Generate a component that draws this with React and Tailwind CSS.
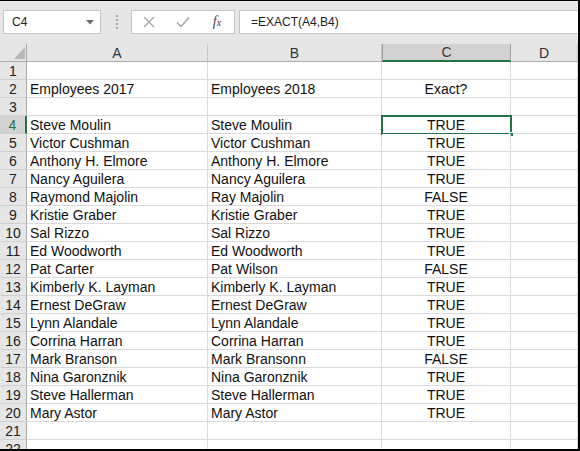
import React from "react";

const rows = [
  ["", "", ""],
  ["Employees 2017", "Employees 2018", "Exact?"],
  ["", "", ""],
  ["Steve Moulin", "Steve Moulin", "TRUE"],
  ["Victor Cushman", "Victor Cushman", "TRUE"],
  ["Anthony H. Elmore", "Anthony H. Elmore", "TRUE"],
  ["Nancy Aguilera", "Nancy Aguilera", "TRUE"],
  ["Raymond Majolin", "Ray Majolin", "FALSE"],
  ["Kristie Graber", "Kristie Graber", "TRUE"],
  ["Sal Rizzo", "Sal Rizzo", "TRUE"],
  ["Ed Woodworth", "Ed Woodworth", "TRUE"],
  ["Pat Carter", "Pat Wilson", "FALSE"],
  ["Kimberly K. Layman", "Kimberly K. Layman", "TRUE"],
  ["Ernest DeGraw", "Ernest DeGraw", "TRUE"],
  ["Lynn Alandale", "Lynn Alandale", "TRUE"],
  ["Corrina Harran", "Corrina Harran", "TRUE"],
  ["Mark Branson", "Mark Bransonn", "FALSE"],
  ["Nina Garonznik", "Nina Garonznik", "TRUE"],
  ["Steve Hallerman", "Steve Hallerman", "TRUE"],
  ["Mary Astor", "Mary Astor", "TRUE"],
  ["", "", ""],
  ["", "", ""],
];

const cell = "h-[18px] border-r border-b border-[#dadada] bg-white text-[14px] leading-[18px] text-[#111] whitespace-nowrap overflow-visible";

function ColHeader({ label, selected }) {
  return (
    <div
      className={
        "h-[18px] flex items-center justify-center text-[14px] leading-none border-r " +
        (selected
          ? "bg-[#d2d2d2] text-[#3a3a3a] border-[#9e9e9e] border-b-2 border-b-[#217346] border-l border-l-[#9e9e9e]"
          : "bg-[#e6e6e6] text-[#333] border-[#c6c6c6] border-b border-b-[#ababab]")
      }
    >
      {label}
    </div>
  );
}

export default function App() {
  return (
    <div
      className="w-[580px] h-[451px] overflow-hidden bg-[#e6e6e6] border-t border-r-2 border-b-2 border-black"
      style={{ fontFamily: '"Liberation Sans", Arial, sans-serif' }}
    >
      {/* formula bar */}
      <div className="h-[43px] flex items-start pt-[9px] pl-[3px]">
        <div className="w-[98px] h-[24px] bg-white border border-[#c6c6c6] flex items-center justify-between pl-[8px] pr-[6px]">
          <span className="text-[12px] text-[#222]">C4</span>
          <svg width="8" height="5" viewBox="0 0 8 5">
            <polygon points="0,0 8,0 4,4.5" fill="#6a6a6a" />
          </svg>
        </div>
        <div className="w-[29px] h-[24px] flex flex-col items-center justify-center gap-[2px] ml-[1px]">
          <span className="w-[2px] h-[2px] bg-[#a9a9a9]" />
          <span className="w-[2px] h-[2px] bg-[#a9a9a9]" />
          <span className="w-[2px] h-[2px] bg-[#a9a9a9]" />
          <span className="w-[2px] h-[2px] bg-[#a9a9a9]" />
        </div>
        <div className="w-[104px] h-[24px] bg-white border border-[#c6c6c6] flex items-center">
          <div className="w-[34px] flex justify-center">
            <svg width="12" height="12" viewBox="0 0 12 12">
              <path d="M1 1 L11 11 M11 1 L1 11" stroke="#a6a6a6" strokeWidth="1.3" />
            </svg>
          </div>
          <div className="w-[34px] flex justify-center">
            <svg width="14" height="12" viewBox="0 0 14 12">
              <path d="M1 6.5 L5 10.5 L13 1.5" stroke="#a6a6a6" strokeWidth="1.5" fill="none" />
            </svg>
          </div>
          <div className="w-[34px] flex justify-center">
            <span
              className="text-[14px] italic text-[#444] leading-none"
              style={{ fontFamily: '"Liberation Serif", "Times New Roman", serif' }}
            >
              f<span className="text-[10px]">x</span>
            </span>
          </div>
        </div>
        <div className="flex-1 h-[24px] ml-[4px] bg-white border-y border-l border-[#c6c6c6] flex items-center pl-[11px]">
          <span className="text-[12px] text-[#222]">=EXACT(A4,B4)</span>
        </div>
      </div>

      {/* grid */}
      <div className="grid grid-cols-[27px_181px_174px_129px_67px]">
        <div className="h-[18px] bg-[#e6e6e6] border-r border-[#ababab] border-b border-b-[#ababab] relative">
          <svg className="absolute left-[14px] top-[3px]" width="11" height="12" viewBox="0 0 11 12">
            <polygon points="11,0 11,12 0,12" fill="#b8b8b8" />
          </svg>
        </div>
        <ColHeader label="A" />
        <ColHeader label="B" />
        <ColHeader label="C" selected />
        <ColHeader label="D" />

        {rows.map((r, i) => {
          const n = i + 1;
          const sel = n === 4;
          return (
            <React.Fragment key={n}>
              <div
                className={
                  "h-[18px] flex items-center justify-center text-[14px] leading-none border-b border-b-[#d0d0d0] " +
                  (sel
                    ? "bg-[#d2d2d2] text-[#217346] border-r-2 border-r-[#217346]"
                    : "bg-[#e6e6e6] text-[#222] border-r border-r-[#ababab]")
                }
              >
                {n}
              </div>
              <div className={cell + " pl-[3px]"}>{r[0]}</div>
              <div className={cell + " pl-[3px]"}>{r[1]}</div>
              <div className={cell + " text-center relative"}>
                {r[2]}
                {sel && (
                  <div className="absolute -left-[1px] -top-[1px] w-[131px] h-[20px] border-2 border-[#217346]">
                    <span className="absolute -right-[4px] -bottom-[4px] w-[5px] h-[5px] bg-[#217346] border border-white" />
                  </div>
                )}
              </div>
              <div className={cell}></div>
            </React.Fragment>
          );
        })}
      </div>
    </div>
  );
}
